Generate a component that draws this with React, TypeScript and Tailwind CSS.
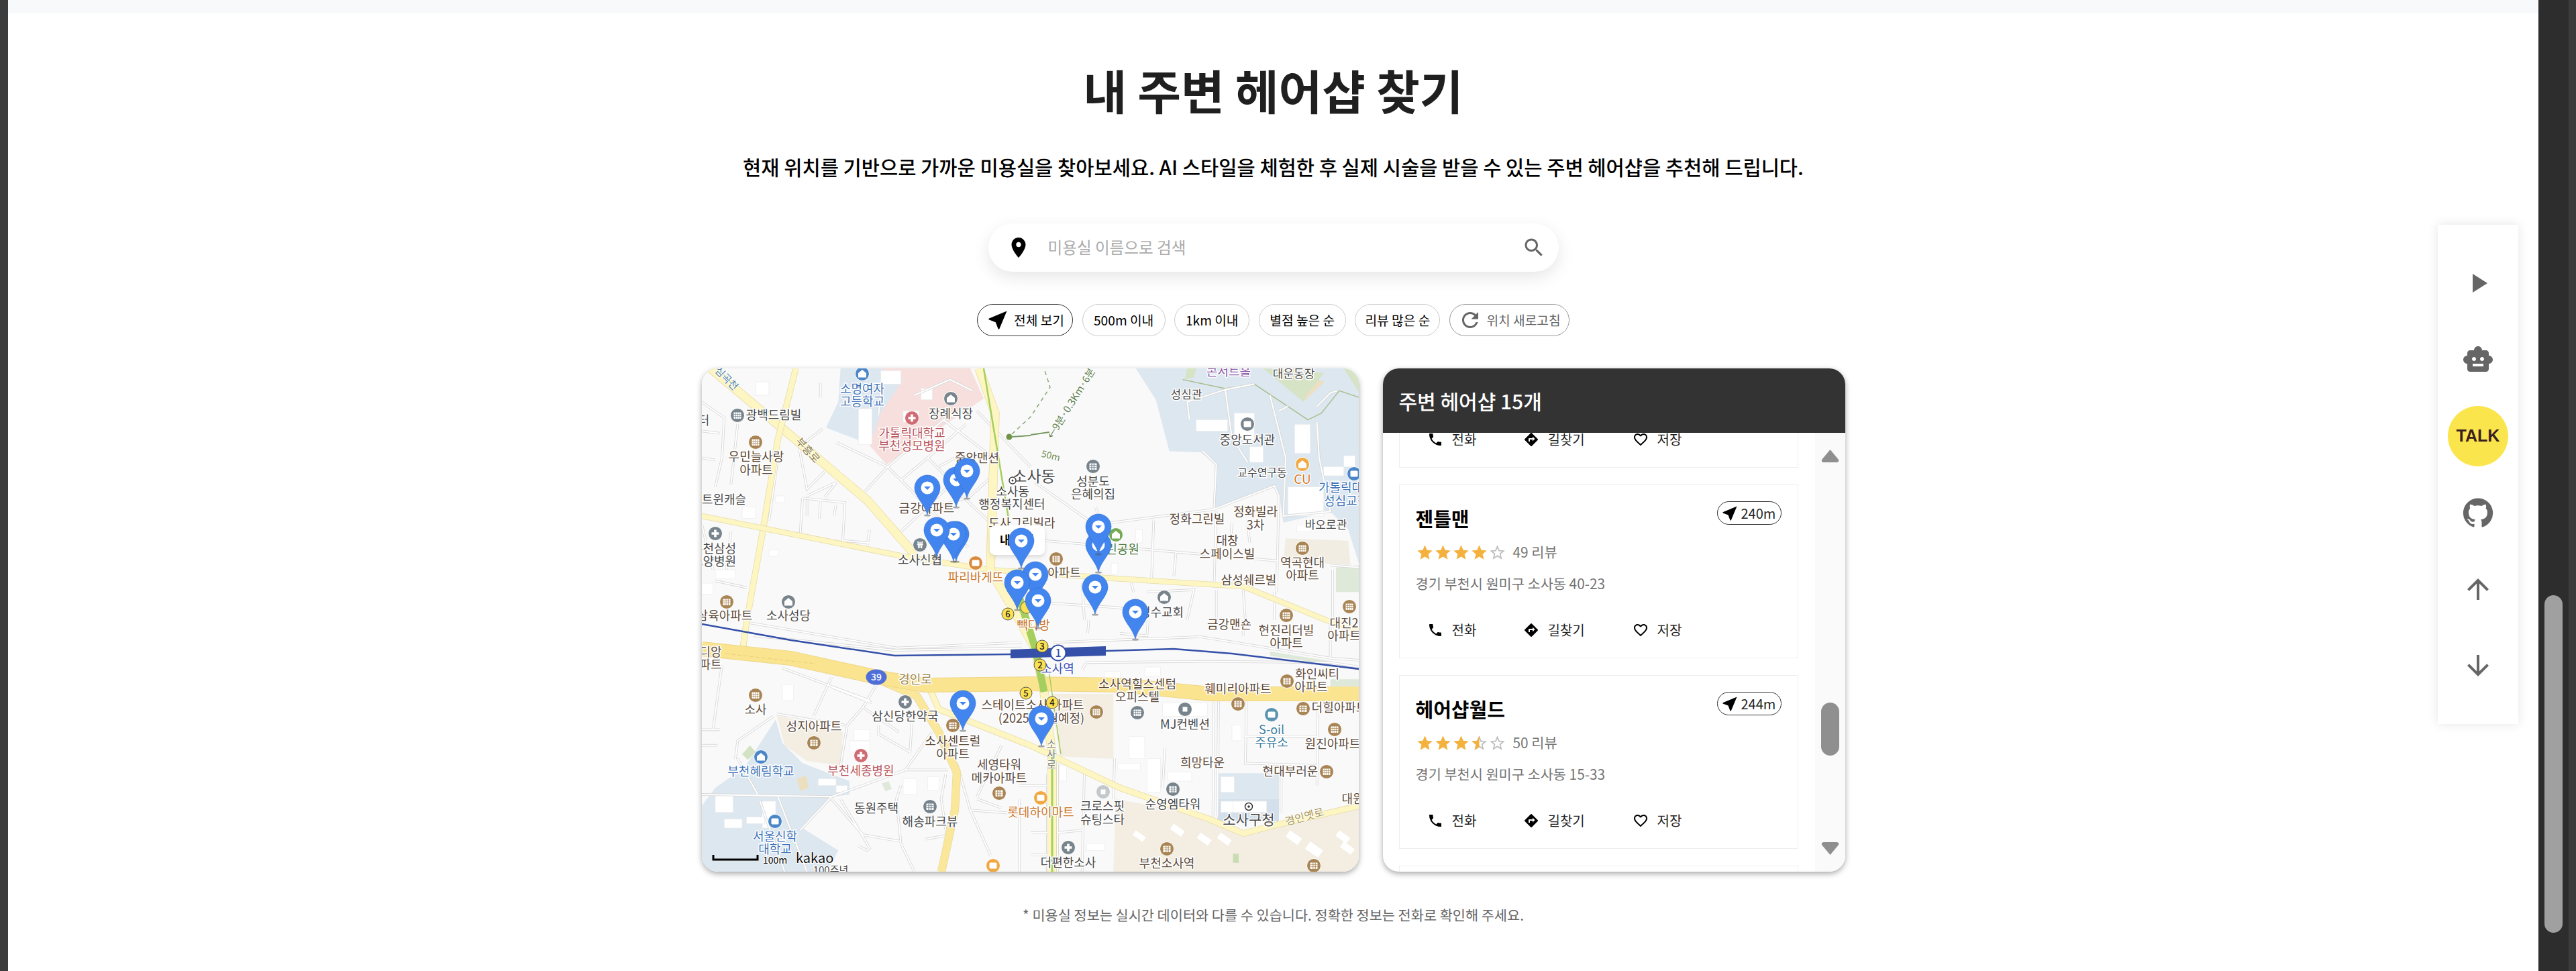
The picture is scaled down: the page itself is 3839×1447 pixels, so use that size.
import React from "react";

const ICONS = {
  play: "M8 5v14l11-7z",
  robot:
    "M20 9V7c0-1.1-.9-2-2-2h-3c0-1.66-1.34-3-3-3S9 3.34 9 5H6c-1.1 0-2 .9-2 2v2c-1.66 0-3 1.34-3 3s1.34 3 3 3v4c0 1.1.9 2 2 2h12c1.1 0 2-.9 2-2v-4c1.66 0 3-1.34 3-3s-1.34-3-3-3zM7.5 11.5c0-.83.67-1.5 1.5-1.5s1.5.67 1.5 1.5S9.83 13 9 13s-1.5-.67-1.5-1.5zM16 17H8v-2h8v2zm-1-4c-.83 0-1.5-.67-1.5-1.5S14.17 10 15 10s1.5.67 1.5 1.5S15.83 13 15 13z",
  github:
    "M12 1.27a11 11 0 00-3.48 21.46c.55.09.73-.28.73-.55v-1.84c-3.03.64-3.67-1.46-3.67-1.46-.55-1.29-1.28-1.65-1.28-1.65-.92-.65.1-.65.1-.65 1.1 0 1.73 1.1 1.73 1.1.92 1.65 2.57 1.2 3.21.92a2 2 0 01.64-1.47c-2.47-.27-5.04-1.19-5.04-5.5 0-1.1.46-2.1 1.2-2.84a3.76 3.76 0 010-2.93s.91-.28 3.11 1.1c1.8-.49 3.7-.49 5.5 0 2.1-1.38 3.02-1.1 3.02-1.1a3.76 3.76 0 010 2.93c.83.74 1.2 1.74 1.2 2.94 0 4.21-2.57 5.13-5.04 5.4.45.37.82.92.82 2.02v3.03c0 .27.1.64.73.55A11 11 0 0012 1.27",
  up: "M4 12l1.41 1.41L11 7.83V20h2V7.83l5.58 5.59L20 12l-8-8-8 8z",
  down: "M20 12l-1.41-1.41L13 16.17V4h-2v12.17l-5.58-5.59L4 12l8 8 8-8z",
  phone:
    "M6.62 10.79c1.44 2.83 3.76 5.14 6.59 6.59l2.2-2.2c.27-.27.67-.36 1.02-.24 1.12.37 2.33.57 3.57.57.55 0 1 .45 1 1V20c0 .55-.45 1-1 1-9.39 0-17-7.61-17-17 0-.55.45-1 1-1h3.5c.55 0 1 .45 1 1 0 1.25.2 2.45.57 3.57.11.35.03.74-.25 1.02l-2.2 2.2z",
  directions:
    "M21.71 11.29l-9-9a.996.996 0 00-1.41 0l-9 9a.996.996 0 000 1.41l9 9c.39.39 1.02.39 1.41 0l9-9a.996.996 0 000-1.41zM14 14.5V12h-4v3H8v-4c0-.55.45-1 1-1h5V7.5l3.5 3.5-3.5 3.5z",
  heart:
    "M16.5 3c-1.74 0-3.41.81-4.5 2.09C10.91 3.81 9.24 3 7.5 3 4.42 3 2 5.42 2 8.5c0 3.78 3.4 6.86 8.55 11.54L12 21.35l1.45-1.32C18.6 15.36 22 12.28 22 8.5 22 5.42 19.58 3 16.5 3zm-4.4 15.55l-.1.1-.1-.1C7.14 14.24 4 11.39 4 8.5 4 6.5 5.5 5 7.5 5c1.54 0 3.04.99 3.57 2.36h1.87C13.46 5.99 14.96 5 16.5 5c2 0 3.5 1.5 3.5 3.5 0 2.89-3.14 5.74-7.9 10.05z",
  near: "M21 3L3 10.53v.98l6.84 2.65L12.48 21h.98L21 3z",
  pin: "M12 2C8.13 2 5 5.13 5 9c0 5.25 7 13 7 13s7-7.75 7-13c0-3.87-3.13-7-7-7zm0 9.5c-1.38 0-2.5-1.12-2.5-2.5s1.12-2.5 2.5-2.5 2.5 1.12 2.5 2.5-1.12 2.5-2.5 2.5z",
  search:
    "M15.5 14h-.79l-.28-.27C15.41 12.59 16 11.11 16 9.5 16 5.91 13.09 3 9.5 3S3 5.91 3 9.5 5.91 16 9.5 16c1.61 0 3.09-.59 4.23-1.57l.27.28v.79l5 4.99L20.49 19l-4.99-5zm-6 0C7.01 14 5 11.99 5 9.5S7.01 5 9.5 5 14 7.01 14 9.5 11.99 14 9.5 14z",
  refresh:
    "M17.65 6.35C16.2 4.9 14.21 4 12 4c-4.42 0-7.99 3.58-7.99 8s3.57 8 7.99 8c3.73 0 6.84-2.55 7.73-6h-2.08c-.82 2.33-3.04 4-5.65 4-3.31 0-6-2.69-6-6s2.69-6 6-6c1.66 0 3.14.69 4.22 1.78L13 11h7V4l-2.35 2.35z",
};

const STAR = "M12 17.27L18.18 21l-1.64-7.03L22 9.24l-7.19-.61L12 2 9.19 8.63 2 9.24l5.46 4.73L5.82 21z";
const STAR_BORDER =
  "M22 9.24l-7.19-.62L12 2 9.19 8.63 2 9.24l5.46 4.73L5.82 21 12 17.27 18.18 21l-1.63-7.03L22 9.24zM12 15.4l-3.76 2.27 1-4.28-3.32-2.88 4.38-.38L12 6.1l1.71 4.04 4.38.38-3.32 2.88 1 4.28L12 15.4z";
const STAR_LEFT = "M12 2L9.19 8.63 2 9.24l5.46 4.73L5.82 21 12 17.27z";

function Icon({ d, className }: { d: string; className: string }) {
  return (
    <svg viewBox="0 0 24 24" fill="currentColor" className={className}>
      <path d={d} />
    </svg>
  );
}

function Stars({ value }: { value: number }) {
  return (
    <div className="flex">
      {[0, 1, 2, 3, 4].map((i) => {
        const full = value >= i + 1;
        const half = !full && value > i;
        return (
          <svg key={i} viewBox="0 0 24 24" className="w-[27px] h-[27px] shrink-0">
            {!full && <path d={STAR_BORDER} fill="#bdbdbd" />}
            {full && <path d={STAR} fill="#f4b13d" />}
            {half && <path d={STAR_LEFT} fill="#f4b13d" />}
          </svg>
        );
      })}
    </div>
  );
}

type Shop = { name: string; rating: number; reviews: number; address: string; distance: string };

const SHOPS: Shop[] = [
  { name: "블루클럽", rating: 4, reviews: 32, address: "경기 부천시 원미구 소사동 42-11", distance: "231m" },
  { name: "젠틀맨", rating: 4, reviews: 49, address: "경기 부천시 원미구 소사동 40-23", distance: "240m" },
  { name: "헤어샵월드", rating: 3.5, reviews: 50, address: "경기 부천시 원미구 소사동 15-33", distance: "244m" },
  { name: "헤어샵", rating: 4, reviews: 21, address: "경기 부천시 원미구 소사동 15-40", distance: "250m" },
];

function ShopCard({ shop }: { shop: Shop }) {
  return (
    <div className="h-[259px] shrink-0 border border-[#eeeeee] bg-white px-6 pt-[27px]">
      <div className="flex justify-between items-start">
        <h3 className="text-[29px] leading-[44px] font-bold text-black">{shop.name}</h3>
        <span className="flex items-center w-[96px] h-[35px] -mt-[3px] border border-[#333333] rounded-full pl-[4px] text-[20px] text-[#222222]">
          <Icon d={ICONS.near} className="w-7 h-7 text-black shrink-0" />
          <span className="ml-[3px]">{shop.distance}</span>
        </span>
      </div>
      <div className="flex items-center h-7 mt-[15px]">
        <Stars value={shop.rating} />
        <span className="ml-[10px] text-[20.8px] text-[#757575]">{shop.reviews} 리뷰</span>
      </div>
      <p className="mt-[18px] text-[20.8px] leading-7 text-[#757575]">{shop.address}</p>
      <div className="flex items-center h-8 mt-[40px] pl-[17px] text-[20px] text-[#222222]">
        <span className="flex items-center gap-[13px] w-[143px]">
          <Icon d={ICONS.phone} className="w-6 h-6 text-black" />
          전화
        </span>
        <span className="flex items-center gap-[13px] w-[163px]">
          <Icon d={ICONS.directions} className="w-6 h-6 text-black" />
          길찾기
        </span>
        <span className="flex items-center gap-[13px]">
          <Icon d={ICONS.heart} className="w-6 h-6 text-black" />
          저장
        </span>
      </div>
    </div>
  );
}

// text labels on the map: x, y (centre), text, colour, size
const INK = "#4a4a4a";
const BROWN = "#5c4a3a";
const BLUE = "#3f74b8";
const RED = "#b9575f";
const ORANGE = "#c9772b";
const LABELS: [number, number, string, string?, number?][] = [
  [239, 31, "소명여자", BLUE],
  [239, 50, "고등학교", BLUE],
  [107, 70, "광백드림빌", INK],
  [371, 68, "장례식장", INK],
  [313, 97, "가톨릭대학교", RED],
  [313, 116, "부천성모병원", RED],
  [81, 132, "우민늘사랑", BROWN],
  [81, 152, "아파트", BROWN],
  [33, 196, "트윈캐슬", INK],
  [3, 78, "터", INK],
  [18, 269, "부천삼성", INK],
  [18, 288, "요양병원", INK],
  [34, 369, "삼육아파트", BROWN],
  [129, 369, "소사성당", INK],
  [335, 209, "금강아파트", BROWN],
  [410, 134, "중앙맨션", BROWN],
  [495, 161, "소사동", INK, 23],
  [463, 184, "소사동", INK],
  [462, 203, "행정복지센터", INK],
  [477, 231, "도사그린빌라", BROWN],
  [325, 286, "소사신협", INK],
  [408, 312, "파리바게뜨", ORANGE],
  [540, 305, "아파트", BROWN],
  [627, 270, "린공원", "#4d7a3c"],
  [494, 383, "빽다방", ORANGE],
  [685, 364, "성수교회", INK],
  [786, 382, "금강맨숀", BROWN],
  [871, 391, "현진리더빌", BROWN],
  [871, 410, "아파트", BROWN],
  [957, 380, "대진2", BROWN],
  [957, 399, "아파트", BROWN],
  [738, 225, "정화그린빌", BROWN],
  [825, 214, "정화빌라", BROWN],
  [825, 234, "3차", BROWN],
  [783, 257, "대창", BROWN],
  [783, 277, "스페이스빌", BROWN],
  [815, 316, "삼성쉐르빌", BROWN],
  [895, 290, "역곡현대", BROWN],
  [895, 309, "아파트", BROWN],
  [930, 233, "바오로관", INK, 17],
  [835, 155, "교수연구동", INK, 16],
  [813, 107, "중앙도서관", INK],
  [722, 39, "성심관", INK, 17],
  [785, 5, "콘서트홀", "#8a5aa8"],
  [882, 8, "대운동장", INK, 17],
  [895, 165, "CU", "#d9771e", 19],
  [952, 178, "가톨릭대", BLUE],
  [960, 198, "성심교정", BLUE],
  [583, 169, "성분도", INK],
  [583, 188, "은혜의집", INK],
  [13, 423, "디앙", BROWN],
  [13, 442, "파트", BROWN],
  [318, 464, "경인로", "#a08a50"],
  [80, 509, "소사", BROWN],
  [167, 534, "성지아파트", BROWN],
  [303, 519, "삼신당한약국", INK],
  [374, 556, "소사센트럴", BROWN],
  [374, 575, "아파트", BROWN],
  [237, 600, "부천세종병원", RED],
  [88, 601, "부천혜림학교", BLUE],
  [443, 591, "세영타워", BROWN],
  [443, 611, "메카아파트", BROWN],
  [260, 656, "동원주택", INK],
  [340, 676, "해송파크뷰", INK],
  [109, 698, "서울신학", BLUE],
  [109, 717, "대학교", BLUE],
  [192, 748, "100주년", INK, 15],
  [493, 502, "스테이트소사 아파트", BROWN],
  [506, 522, "(2025년5월예정)", BROWN],
  [530, 448, "소사역", "#3f51b5", 18],
  [649, 471, "소사역힐스센텀", BROWN],
  [649, 490, "오피스텔", BROWN],
  [799, 478, "훼미리아파트", BROWN],
  [917, 456, "화인씨티", BROWN],
  [908, 475, "아파트", BROWN],
  [950, 506, "더힐아파트", BROWN],
  [940, 560, "원진아파트", BROWN],
  [720, 531, "MJ컨벤션", INK],
  [849, 539, "S-oil", "#3e7ea0"],
  [849, 558, "주유소", "#3e7ea0"],
  [746, 588, "희망타운", BROWN],
  [877, 601, "현대부러운", BROWN],
  [970, 642, "대원", BROWN],
  [702, 650, "순영엠타워", INK],
  [597, 653, "크로스핏", INK],
  [597, 673, "슈팅스타", INK],
  [505, 662, "롯데하이마트", ORANGE],
  [815, 672, "소사구청", INK, 21],
  [546, 737, "더편한소사", INK],
  [693, 738, "부천소사역", BROWN],
];

// labels that follow a road: x, y, text, colour, size, angle
const ROAD_LABELS: [number, number, string, string, number, number][] = [
  [158, 122, "부흥로", "#8a7a40", 16, 48],
  [37, 15, "심곡천", "#4d7ea8", 15, 45],
  [520, 130, "50m", "#6a8a50", 14, 14],
  [550, 52, "←9분·0.3Km·6분", "#5e7e4e", 15, -58],
  [898, 668, "경인옛로", "#a8985a", 16, -15],
  [521, 560, "소", "#777777", 15, 0],
  [521, 575, "사", "#777777", 15, 0],
  [521, 591, "로", "#777777", 15, 0],
];

// poi bubbles: x, y, colour, glyph
const APT = "#a98555";
const GRAY = "#78848c";
type Glyph = "apt" | "cross" | "won" | "house" | "dot" | "book";
const POIS: [number, number, string, Glyph][] = [
  [53, 70, GRAY, "apt"], [80, 110, APT, "apt"], [20, 246, GRAY, "cross"], [37, 348, APT, "apt"],
  [129, 348, GRAY, "house"], [239, 8, "#4a86c8", "house"], [371, 45, GRAY, "house"], [313, 74, "#cf6b72", "cross"],
  [325, 263, GRAY, "won"], [408, 290, "#d98a3d", "book"], [583, 146, GRAY, "apt"], [813, 83, GRAY, "book"],
  [895, 143, "#f0a942", "house"], [972, 157, "#4a86c8", "book"], [617, 248, "#76ab55", "house"], [528, 284, APT, "apt"],
  [895, 268, APT, "apt"], [965, 355, APT, "apt"], [871, 368, APT, "apt"], [689, 341, GRAY, "house"],
  [80, 487, APT, "apt"], [167, 558, APT, "apt"], [88, 579, "#4a86c8", "house"], [237, 577, "#cf6b72", "cross"],
  [303, 497, GRAY, "cross"], [374, 532, APT, "apt"], [109, 675, "#4a86c8", "book"], [340, 653, GRAY, "apt"],
  [443, 633, APT, "apt"], [434, 741, "#f0a942", "book"], [588, 512, APT, "apt"], [649, 513, GRAY, "apt"],
  [720, 508, GRAY, "dot"], [799, 500, APT, "apt"], [872, 466, APT, "apt"], [896, 507, APT, "apt"],
  [849, 516, "#5a93b0", "book"], [943, 538, APT, "apt"], [931, 601, APT, "apt"], [702, 627, GRAY, "apt"],
  [598, 631, "#c4c8cb", "dot"], [505, 640, "#f0a942", "book"], [546, 714, GRAY, "cross"], [693, 716, APT, "apt"],
  [912, 741, APT, "apt"],
];

function Poi({ x, y, color, glyph }: { x: number; y: number; color: string; glyph: Glyph }) {
  return (
    <g transform={`translate(${x} ${y})`}>
      <circle r="10.5" fill={color} stroke="#ffffff" strokeWidth="1" />
      {glyph === "apt" && (
        <>
          <rect x="-5.5" y="-4.5" width="11" height="9.5" rx="1" fill="#ffffff" />
          <path d="M-5.5 -1.5H5.5M-5.5 1.5H5.5M-2.5 -4.5V5M0 -4.5V5M2.5 -4.5V5" stroke={color} strokeWidth="0.7" />
        </>
      )}
      {glyph === "cross" && <path d="M-5.5 0H5.5M0 -5.5V5.5" stroke="#ffffff" strokeWidth="3.6" />}
      {glyph === "won" && (
        <text textAnchor="middle" y="5" fontSize="14" fontWeight="700" fill="#ffffff">
          ₩
        </text>
      )}
      {glyph === "house" && <path d="M0 -6L6 -1V5.5H-6V-1Z" fill="#ffffff" />}
      {glyph === "dot" && <rect x="-3.5" y="-3.5" width="7" height="7" fill="#ffffff" />}
      {glyph === "book" && <rect x="-5.5" y="-4.5" width="11" height="9" rx="1.5" fill="#ffffff" />}
    </g>
  );
}

// marker tips, back to front
const MARKERS: [number, number][] = [
  [336, 218], [379, 206], [395, 193], [379, 287], [375, 287], [350, 281], [591, 303], [591, 276],
  [476, 297], [497, 347], [470, 359], [501, 386], [586, 366], [646, 403], [389, 539], [506, 562],
];

function Marker({ x, y }: { x: number; y: number }) {
  return (
    <g transform={`translate(${x} ${y})`}>
      <ellipse cx="0" cy="1" rx="5" ry="1.5" fill="#555555" opacity="0.5" />
      <path
        d="M0 0C-4 -16 -19 -27 -19 -40A19 19 0 1 1 19 -40C19 -27 4 -16 0 0Z"
        fill="#4285ee"
        stroke="#2f6bd0"
        strokeWidth="0.6"
      />
      <circle cx="0" cy="-40" r="9.5" fill="#ffffff" />
      <path d="M-5 -42H5L0 -37Z" fill="#4285ee" />
    </g>
  );
}

const EXITS: [number, number, string][] = [
  [456, 366, "6"], [507, 414, "3"], [504, 442, "2"], [483, 484, "5"], [522, 498, "4"],
];

// minor streets per quarter of the map, in coordinates of a 3x crop
const STREETS = [
  {
    at: "translate(0 0) scale(.3333)",
    d: "M0 150L100 220L90 400L60 530M0 280L80 290M0 400L60 410M160 250L130 520M340 400L300 680M430 330L470 540L550 460M470 570L600 510M550 575L600 510M450 580L640 600L630 770L750 780M750 720L740 790M450 580L440 740M470 590L470 660M530 590L525 670M600 610L590 660M540 270L450 340M600 330L830 440L730 550M830 440L1080 230L1200 170M1080 230L1290 390M830 440L1190 800M890 500L1010 400L1110 500M1010 400L1180 250M890 730L1110 520L1290 690M1190 580L1290 490M980 640L1180 580M1230 190L1470 440M1060 440L1130 400M790 210L800 100M950 120L1110 50L1210 100M530 65L530 130M0 700L50 900M60 950L200 980M130 730L110 900",
  },
  {
    at: "translate(490 0) scale(.3333)",
    d: "M700 150L710 230M700 150L870 95L1000 70M870 95L900 310L970 420M770 370L830 430L820 630M360 690L820 630L1090 525L1110 570L1100 1000M60 770L1100 860M550 680L540 960M650 820L640 930M830 640L820 980M900 690L895 770M970 700L980 780M290 620L300 650M20 510L260 680M1070 120L1140 400L1130 660L1340 640L1290 400L1280 240M1110 190L1150 170M1280 170L1340 110L1370 100M230 960L240 1125M450 960L460 1000M520 1000L730 990L700 1125M830 990L830 1125M950 990L960 1125M1090 1000L1090 1125M90 1050L400 1070L510 1125M1340 880L1470 890M1350 900L1350 1125",
  },
  {
    at: "translate(0 375) scale(.3333)",
    d: "M200 10L870 125L1430 100M230 70L860 135L1430 125M360 215L750 360M580 255L500 430M580 300L760 370M780 290L720 390L650 470L620 650M720 390L880 500M790 470L790 510L930 590M940 450L930 600M320 430L160 540L150 620M335 420L640 470M160 620L250 780M0 780L580 790L440 940M260 810L370 1125M340 790L470 1125M580 790L910 670L1030 500M910 670L1100 670M580 800L720 960L890 990M620 800L750 1020L740 1030L700 1010M890 740L870 800L890 1000M1090 690L1070 800L1100 1000M890 1000L950 1125M1000 980L1110 960M1140 640L1200 850L1290 1050M1200 850L1470 870M1230 800L1340 840M1340 560L1230 790M1420 740L1470 740M1420 800L1420 1125M0 490L80 490M90 200L50 490M0 560L70 560",
  },
  {
    at: "translate(490 375) scale(.3333)",
    d: "M230 220L250 190L800 185L1340 190L1470 210M100 100L760 75L1340 170L1470 180M820 340L815 880M840 350L835 880M965 350L960 640L1280 650M960 520L1280 520M1285 400L1280 740M240 690L230 1125M120 640L120 1125M75 690L75 1125M0 740L75 740M0 950L75 950M120 950L230 940M0 1050L75 1050M600 570L590 750M1120 700L1120 860M375 620L370 800M260 0L255 60M400 60L520 70L525 0M950 0L950 70M1340 0L1340 170",
  },
];

// pale buildings: quarter offset x, y, then x y w h in the 3x crop
const BUILDINGS: [number, number, number, number, number, number][] = [
  [0, 0, 700, 180, 60, 160], [0, 0, 800, 10, 90, 60], [0, 0, 240, 60, 60, 60], [0, 0, 180, 620, 60, 50],
  [0, 0, 330, 570, 40, 30], [0, 0, 300, 810, 40, 30], [0, 0, 60, 900, 90, 40], [0, 0, 0, 960, 50, 50],
  [0, 0, 980, 90, 50, 50], [0, 0, 900, 190, 70, 50],
  [490, 0, 740, 230, 140, 50], [490, 0, 910, 200, 90, 120], [490, 0, 980, 350, 60, 70], [490, 0, 1180, 250, 70, 130],
  [490, 0, 1150, 530, 160, 130], [490, 0, 1310, 440, 90, 40], [490, 0, 1400, 390, 50, 50], [490, 0, 470, 720, 30, 60],
  [490, 0, 360, 870, 30, 50], [490, 0, 1190, 700, 60, 30],
  [0, 375, 360, 290, 50, 70], [0, 375, 60, 780, 80, 80], [0, 375, 270, 810, 60, 120], [0, 375, 100, 890, 80, 40],
  [0, 375, 200, 880, 80, 30], [0, 375, 520, 710, 80, 30], [0, 375, 600, 740, 50, 30], [0, 375, 680, 490, 70, 50],
  [0, 375, 660, 540, 90, 50], [0, 375, 900, 710, 60, 70], [0, 375, 1010, 700, 50, 60],
  [490, 375, 440, 520, 70, 100], [490, 375, 520, 620, 60, 150], [490, 375, 390, 640, 100, 30], [490, 375, 610, 680, 110, 40],
  [490, 375, 590, 370, 200, 60], [490, 375, 900, 470, 40, 70], [490, 375, 850, 700, 60, 70], [490, 375, 850, 810, 190, 50],
  [490, 375, 905, 810, 150, 50], [490, 375, 130, 650, 30, 70], [490, 375, 250, 1000, 80, 30], [490, 375, 510, 210, 70, 40],
  [490, 375, 330, 230, 70, 30],
];

const BEIGE_BLOCKS: [number, number, number][] = [
  [640, 660, 30], [760, 700, 30], [850, 700, 30], [1160, 690, 35], [1250, 740, 40], [1380, 690, 30], [1400, 740, 30], [470, 690, 25],
];

function KakaoMap() {
  return (
    <svg
      viewBox="0 0 979 750"
      className="block w-full h-full font-['Noto_Sans_CJK_KR',sans-serif]"
      fill="none"
    >
      <rect width="979" height="750" fill="#f9f9f9" />
      {/* campus and hospital grounds */}
      <g transform="translate(0 0) scale(.3333)">
        <path d="M800 0L900 50L790 200L750 345L825 430L1260 135L1200 0Z" fill="#f7dfdd" />
        <path d="M620 0L800 0L900 50L800 200L750 340L555 265L610 150Z" fill="#dce7f0" />
        <path d="M120 60L170 90L280 190L240 180L170 120Z" fill="#b7d5e8" />
      </g>
      <g transform="translate(490 0) scale(.3333)">
        <path d="M470 0L560 140L620 370L760 375L830 430L820 630L1090 525L1110 560L1130 690L1340 640L1420 720L1470 880L1470 0Z" fill="#dce7f0" />
        <path d="M1040 0L1310 20L1220 150Z" fill="#d6e3c4" />
        <path d="M1400 0L1470 0L1470 110Z" fill="#d6e3c4" />
        <path d="M700 0L740 0L730 40L690 50Z" fill="#d6e3c4" />
        <path d="M1230 140L1315 60L1290 50L1225 130Z" fill="#ecdfc4" />
        <path d="M1140 760L1420 770L1430 880L1130 860Z" fill="#f2ede3" />
        <path d="M1365 890L1470 880L1470 1000L1365 1000Z" fill="#dfe9da" />
        <path d="M680 50L870 90L1000 70L1240 230L1300 200L1380 100L1470 130" stroke="#a9bf8f" strokeWidth="1.5" vectorEffect="non-scaling-stroke" />
      </g>
      <g transform="translate(0 375) scale(.3333)">
        <path d="M0 830L60 750L190 660L330 445L360 550L450 640L660 720L660 780L580 790L450 930L610 1030L560 1125L0 1125Z" fill="#dce7f0" />
        <path d="M335 425L630 500L620 650L470 630L370 560Z" fill="#f3ede2" />
        <path d="M180 600L215 560L240 590L205 625Z" fill="#d3e2c2" />
        <path d="M425 710L465 695L478 750L440 765Z" fill="#ecdfc0" />
        <path d="M805 730L835 720L850 755L820 765Z" fill="#dfe9da" />
      </g>
      <g transform="translate(490 375) scale(.3333)">
        <path d="M380 800L810 880L940 960L1050 935L1470 830L1470 1125L370 1125Z" fill="#f3ede2" />
        <path d="M90 330L370 330L370 620L130 610Z" fill="#f3ede2" />
        <path d="M835 685H1110V800H835Z" fill="#dce7f0" />
        <path d="M835 800H1110V900H835Z" fill="#d3e0ec" />
        <path d="M1070 140L1350 185L1350 200L1070 160Z" fill="#dfe9da" />
        <path d="M1340 265H1470V295H1340Z" fill="#dfe9da" />
        <path d="M905 1045H930V1085H905Z" fill="#c9dcb4" />
        {BEIGE_BLOCKS.map(([x, y, s]) => (
          <rect key={x} x={x} y={y + 250} width={s + 30} height={s} fill="#ffffff" transform={`rotate(35 ${x} ${y + 250})`} />
        ))}
      </g>
      {BUILDINGS.map(([ox, oy, x, y, w, h], i) => (
        <rect key={i} x={ox + x / 3} y={oy + y / 3} width={w / 3} height={h / 3} fill="#ffffff" stroke="#ececec" strokeWidth="0.7" />
      ))}
      {/* streets */}
      {STREETS.map((s) => (
        <g key={s.at} transform={s.at}>
          <path d={s.d} stroke="#d8d8d8" strokeWidth="3.8" vectorEffect="non-scaling-stroke" />
          <path d={s.d} stroke="#ffffff" strokeWidth="2" vectorEffect="non-scaling-stroke" />
        </g>
      ))}
      {/* main roads */}
      {[
        { d: "M13 0L117 87L247 197L317 277", w: 12, c: "#fdf6c2" },
        { d: "M140 0L113 107L90 247L67 375L60 425", w: 8, c: "#fdf6c2" },
        { d: "M0 220L100 240L300 280L427 300L517 306L600 312L807 325L930 375L980 390", w: 7, c: "#fdf6c2" },
        { d: "M413 0L437 67L433 200L430 300L473 375L497 418L510 482L522 575L522 750", w: 12, c: "#fdf6c2" },
        { d: "M273 468L320 488L353 542L380 602L377 658L357 750", w: 11, c: "#fbe79a" },
        { d: "M340 478L353 508L490 562L623 625L757 672L807 693L857 680L980 652", w: 8, c: "#fdf6c2" },
      ].map((r) => (
        <g key={r.d}>
          <path d={r.d} stroke="#e6dba8" strokeWidth={r.w + 1.5} />
          <path d={r.d} stroke={r.c} strokeWidth={r.w} />
        </g>
      ))}
      <path d="M0 418L133 432L260 460L333 472L490 470L623 472L757 485L980 485" stroke="#ecd688" strokeWidth="22" />
      <path d="M0 418L133 432L260 460L333 472L490 470L623 472L757 485L980 485" stroke="#fbe48f" strokeWidth="20" />
      <path d="M35 425L170 440" stroke="#e8cf7c" strokeWidth="1" strokeDasharray="6 3" />
      {/* subway and rail trail */}
      <path d="M420 0L457 223" stroke="#a4cf5f" strokeWidth="2.5" />
      <path d="M474 344L497 418L510 482" stroke="#a4cf5f" strokeWidth="11" />
      <path d="M522 575V750" stroke="#a4cf5f" strokeWidth="3" />
      <path d="M517 450L535 575" stroke="#a4cf5f" strokeWidth="1.5" />
      <path d="M0 381L133 405L287 428L460 426M602 421L703 418L790 425L890 437L980 448" stroke="#3450a8" strokeWidth="2.5" />
      <path d="M460 419L602 414V428L460 432Z" fill="#3450a8" />
      {/* walking route */}
      <path d="M490 99L518 95" stroke="#7a9a64" strokeWidth="2" />
      <circle cx="458" cy="102" r="4.5" fill="#6f9347" />
      <path d="M462 98L490 72L519 28L510 0" stroke="#8aa877" strokeWidth="1.5" strokeDasharray="6 5" />
      <path d="M461 102L490 100" stroke="#7a9a64" strokeWidth="2" />
      {POIS.map(([x, y, c, g], i) => (
        <Poi key={i} x={x} y={y} color={c} glyph={g} />
      ))}
      <circle cx="484" cy="356" r="9" fill="#fbe14f" stroke="#666666" strokeWidth="1" />
      <g fontSize="18" textAnchor="middle" stroke="#ffffff" strokeWidth="3" paintOrder="stroke" strokeLinejoin="round">
        {LABELS.map(([x, y, t, c, s], i) => (
          <text key={i} x={x} y={y + (s ?? 18) * 0.36} fill={c ?? INK} fontSize={s ?? 18}>
            {t}
          </text>
        ))}
        {ROAD_LABELS.map(([x, y, t, c, s, a], i) => (
          <text key={i} transform={`translate(${x} ${y}) rotate(${a})`} y={s * 0.36} fill={c} fontSize={s} strokeWidth="1.5">
            {t}
          </text>
        ))}
      </g>
      {EXITS.map(([x, y, t]) => (
        <g key={t}>
          <circle cx={x} cy={y} r="9" fill="#fbe14f" stroke="#555555" strokeWidth="1" />
          <text x={x} y={y + 5} textAnchor="middle" fontSize="13" fontWeight="500" fill="#222222">
            {t}
          </text>
        </g>
      ))}
      <circle cx="531" cy="424" r="11.5" fill="#ffffff" stroke="#3450a8" strokeWidth="2" />
      <text x="531" y="430" textAnchor="middle" fontSize="16" fontWeight="500" fill="#3450a8">
        1
      </text>
      <ellipse cx="260" cy="460" rx="15.5" ry="11.5" fill="#4f6fd8" />
      <text x="260" y="465" textAnchor="middle" fontSize="14" fontWeight="500" fill="#ffffff">
        39
      </text>
      <circle cx="463" cy="167" r="5" fill="#ffffff" stroke="#444444" strokeWidth="1.5" />
      <circle cx="463" cy="167" r="1.5" fill="#444444" />
      <circle cx="815" cy="653" r="5.5" fill="#ffffff" stroke="#333333" strokeWidth="1.5" />
      <circle cx="815" cy="653" r="1.8" fill="#333333" />
      {/* scale and logo */}
      <path d="M17 725V732H83V725" stroke="#000000" strokeWidth="3" />
      <text x="91" y="738" fontSize="14" fill="#000000" stroke="#ffffff" strokeWidth="2" paintOrder="stroke">
        100m
      </text>
      <text x="140" y="737" fontSize="20" fill="#111111" stroke="#ffffff" strokeWidth="2" paintOrder="stroke">
        kakao
      </text>
      {/* my location tooltip */}
      <rect x="429" y="234" width="82" height="44" rx="8" fill="#ffffff" className="drop-shadow-md" />
      <text x="444" y="262" fontSize="17" fontWeight="700" fill="#000000">
        내 위치
      </text>
      {MARKERS.map(([x, y], i) => (
        <Marker key={i} x={x} y={y} />
      ))}
    </svg>
  );
}

const FILTERS = [
  { label: "500m 이내", w: "w-[124px]" },
  { label: "1km 이내", w: "w-[112px]" },
  { label: "별점 높은 순", w: "w-[130px]" },
  { label: "리뷰 많은 순", w: "w-[127px]" },
];

export default function App() {
  return (
    <div className="flex h-[1447px] overflow-hidden bg-white font-['Noto_Sans_CJK_KR',sans-serif]">
      <div className="w-3 shrink-0 bg-[#3c3c3c]" />

      <main className="relative flex-1 flex flex-col items-center min-w-0">
        <div className="self-stretch h-5 bg-[#f8f9fa]" />
        <h1 className="mt-[77px] text-[70.4px] leading-[72px] font-bold text-[#1f1f1f]">내 주변 헤어샵 찾기</h1>
        <p className="mt-[60px] text-[29.6px] leading-10 font-medium text-black">
          현재 위치를 기반으로 가까운 미용실을 찾아보세요. AI 스타일을 체험한 후 실제 시술을 받을 수 있는 주변 헤어샵을 추천해 드립니다.
        </p>

        <div className="mt-[64px] flex items-center w-[850px] h-[72px] pl-[27px] pr-[19px] rounded-full bg-white shadow-[0_8px_24px_rgba(0,0,0,0.1)]">
          <Icon d={ICONS.pin} className="w-9 h-9 text-black shrink-0" />
          <input
            placeholder="미용실 이름으로 검색"
            className="flex-1 ml-[26px] text-[23.6px] outline-none placeholder:text-[#aaaaaa]"
          />
          <Icon d={ICONS.search} className="w-9 h-9 text-[#666666] shrink-0" />
        </div>

        <div className="mt-[48px] flex gap-[13.6px] text-[19.2px] text-black">
          <button className="flex items-center justify-center gap-[6px] w-[143px] h-12 border border-[#333333] rounded-full">
            <Icon d={ICONS.near} className="w-9 h-9 shrink-0" />
            전체 보기
          </button>
          {FILTERS.map((f) => (
            <button key={f.label} className={`flex items-center justify-center h-12 border border-[#cccccc] rounded-full ${f.w}`}>
              {f.label}
            </button>
          ))}
          <button className="flex items-center justify-center gap-[6px] w-[179px] h-12 border border-[#999999] rounded-full text-[#666666]">
            <Icon d={ICONS.refresh} className="w-9 h-9 shrink-0" />
            위치 새로고침
          </button>
        </div>

        <div className="mt-[48px] flex gap-9 w-[1704px] h-[750px]">
          <div className="w-[979px] shrink-0 rounded-3xl overflow-hidden shadow-[0_3px_8px_rgba(0,0,0,0.35)]">
            <KakaoMap />
          </div>
          <section className="flex flex-col w-[689px] rounded-3xl overflow-hidden bg-white shadow-[0_3px_8px_rgba(0,0,0,0.35)]">
            <h2 className="flex items-center h-24 shrink-0 px-6 bg-[#333333] text-[30px] font-medium text-white">
              주변 헤어샵 15개
            </h2>
            <div className="flex flex-1 min-h-0">
              <div className="flex-1 min-w-0 overflow-hidden pl-6 pr-[25px]">
                <div className="flex flex-col gap-[25px] -mt-[207px]">
                  {SHOPS.map((s) => (
                    <ShopCard key={s.name} shop={s} />
                  ))}
                </div>
              </div>
              <div className="flex flex-col items-center w-[45px] shrink-0 bg-[#fafafa] pt-[24px]">
                <svg viewBox="0 0 27 21" className="w-[27px] h-[21px] shrink-0">
                  <path d="M13.5 1L26 16Q27 20 23 20H4Q0 20 1 16Z" fill="#8f8f8f" />
                </svg>
                <div className="w-[27px] h-[79px] mt-[357px] rounded-full bg-[#8f8f8f] shrink-0" />
                <svg viewBox="0 0 27 21" className="w-[27px] h-[21px] mt-[128px] shrink-0">
                  <path d="M13.5 20L26 5Q27 1 23 1H4Q0 1 1 5Z" fill="#8f8f8f" />
                </svg>
              </div>
            </div>
          </section>
        </div>

        <p className="mt-[52px] text-[20.8px] leading-6 text-[#666666]">
          * 미용실 정보는 실시간 데이터와 다를 수 있습니다. 정확한 정보는 전화로 확인해 주세요.
        </p>

        <aside className="absolute top-[335px] right-[30px] flex flex-col items-center w-[120px] py-[30px] bg-white shadow-[0_0_16px_rgba(0,0,0,0.1)] text-[#666666]">
          {[ICONS.play, ICONS.robot].map((d) => (
            <span key={d} className="flex items-center justify-center h-[114px]">
              <Icon d={d} className="w-12 h-12" />
            </span>
          ))}
          <span className="flex items-center justify-center h-[114px]">
            <span className="flex items-center justify-center w-[90px] h-[90px] rounded-full bg-[#fbe54d] text-[25px] font-bold text-[#3a2020] font-['Liberation_Sans',sans-serif]">
              TALK
            </span>
          </span>
          {[ICONS.github, ICONS.up, ICONS.down].map((d) => (
            <span key={d} className="flex items-center justify-center h-[114px]">
              <Icon d={d} className="w-12 h-12" />
            </span>
          ))}
        </aside>
      </main>

      <div className="flex shrink-0">
        <div className="w-[45px] bg-[#2d2d2d] px-[9px] pt-[887px]">
          <div className="h-[503px] rounded-[14px] bg-[#a0a0a0]" />
        </div>
        <div className="w-[11px] bg-[#3c3c3c]" />
      </div>
    </div>
  );
}
